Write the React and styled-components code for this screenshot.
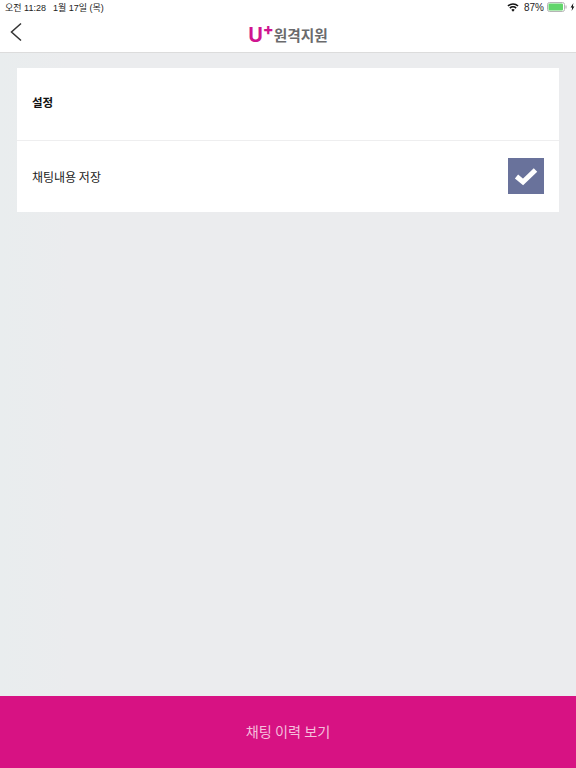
import { createGlobalStyle } from "styled-components";
import styled from "styled-components";

const Global = createGlobalStyle`
    html, body {
        margin: 0;
        padding: 0;
    }
    body {
        font-family: "Liberation Sans", "Noto Sans CJK KR", sans-serif;
        background: #ebecee;
    }
`;

export default function App() {
    return (
        <>
            <Global />
            <Page>
                <Top>
                    <StatusBar>
                        <StatusLeft>
                            <span>오전 11:28</span>
                            <span>1월 17일 (목)</span>
                        </StatusLeft>
                        <StatusRight>
                            <svg width="12" height="9" viewBox="0 0 13 10">
                                <path d="M6.5 9.6 L4.6 7.4 A3 3 0 0 1 8.4 7.4 Z" fill="#111" />
                                <path d="M3.6 6.3 L2.4 5 A6 6 0 0 1 10.6 5 L9.4 6.3 A4.4 4.4 0 0 0 3.6 6.3 Z" fill="#111" />
                                <path d="M1.5 4 L0.3 2.8 A9 9 0 0 1 12.7 2.8 L11.5 4 A7.4 7.4 0 0 0 1.5 4 Z" fill="#111" />
                            </svg>
                            <Percent>87%</Percent>
                            <svg width="28" height="10" viewBox="0 0 28 10">
                                <rect x="0.5" y="0.5" width="17" height="9" rx="2" fill="none" stroke="#b5b5b5" />
                                <rect x="1.5" y="1.5" width="14.5" height="7" rx="1" fill="#62d56b" />
                                <rect x="18.5" y="3.5" width="1" height="3" fill="#a9a9a9" />
                                <path d="M26.4 1 L23.6 5.4 H25.2 L24.6 9 L27.4 4.4 H25.8 Z" fill="#111" />
                            </svg>
                        </StatusRight>
                    </StatusBar>
                    <NavBar>
                        <BackButton>
                            <svg width="14" height="20" viewBox="0 0 14 20">
                                <path d="M12 1.5 L2.5 10 L12 18.5" fill="none" stroke="#333" strokeWidth="1.5" />
                            </svg>
                        </BackButton>
                        <Logo>
                            <LogoU>U</LogoU>
                            <LogoPlus>+</LogoPlus>
                            <LogoText>원격지원</LogoText>
                        </Logo>
                    </NavBar>
                </Top>
                <Card>
                    <Row>
                        <Heading>설정</Heading>
                    </Row>
                    <Row>
                        <Label>채팅내용 저장</Label>
                        <CheckBox>
                            <svg width="24" height="20" viewBox="0 0 24 20">
                                <path d="M2.5 10.5 L9 16 L21.5 4" fill="none" stroke="#fff" strokeWidth="5" />
                            </svg>
                        </CheckBox>
                    </Row>
                </Card>
                <Spacer />
                <Footer>채팅 이력 보기</Footer>
            </Page>
        </>
    );
}

const Page = styled.div`
    width: 576px;
    height: 768px;
    display: flex;
    flex-direction: column;
    overflow: hidden;
    background: linear-gradient(90deg, #e9edee, #ebecee 12%);
`;

const Top = styled.div`
    background: #fff;
    border-bottom: 1px solid #dcdcdc;
    height: 52px;
    flex-shrink: 0;
`;

const StatusBar = styled.div`
    height: 14px;
    padding: 0 1px 0 5px;
    display: flex;
    align-items: center;
    justify-content: space-between;
    font-size: 9px;
    color: #222;
`;

const StatusLeft = styled.div`
    display: flex;
    gap: 7px;
`;

const StatusRight = styled.div`
    display: flex;
    align-items: center;
    gap: 3px;
`;

const Percent = styled.span`
    font-size: 10px;
    margin-left: 2px;
`;

const NavBar = styled.div`
    position: relative;
    height: 38px;
    display: flex;
    align-items: center;
    justify-content: center;
`;

const BackButton = styled.div`
    position: absolute;
    left: 9px;
    top: 8px;
    line-height: 0;
`;

const Logo = styled.div`
    display: flex;
    align-items: flex-start;
    margin-top: 4px;
`;

const LogoU = styled.span`
    font-family: "Inter", sans-serif;
    font-size: 20px;
    line-height: 22px;
    font-weight: 700;
    color: #cf1490;
`;

const LogoPlus = styled.span`
    font-family: "Inter", sans-serif;
    font-size: 16px;
    line-height: 11px;
    font-weight: 800;
    color: #cf1490;
`;

const LogoText = styled.span`
    font-family: "Noto Sans CJK KR", sans-serif;
    font-size: 14.7px;
    line-height: 21px;
    font-weight: 700;
    color: #6a6a6c;
`;

const Card = styled.div`
    margin: 15px 17px 0;
    background: #fff;
`;

const Row = styled.div`
    height: 72px;
    padding: 0 15px;
    display: flex;
    align-items: center;
    justify-content: space-between;
    box-sizing: border-box;
    & + & {
        border-top: 1px solid #eeeeef;
    }
`;

const Heading = styled.span`
    font-family: "Noto Sans CJK KR", sans-serif;
    font-size: 11.5px;
    font-weight: 700;
    color: #111;
    margin-bottom: 4px;
`;

const Label = styled.span`
    font-family: "Noto Sans CJK KR", sans-serif;
    font-size: 12px;
    color: #222;
    margin-bottom: 1px;
`;

const CheckBox = styled.div`
    width: 36px;
    height: 36px;
    background: #69729b;
    display: flex;
    align-items: center;
    justify-content: center;
    margin-bottom: 1px;
`;

const Spacer = styled.div`
    flex: 1;
`;

const Footer = styled.div`
    height: 72px;
    flex-shrink: 0;
    padding-bottom: 3px;
    box-sizing: border-box;
    background: #d71283;
    color: #f5bfdc;
    display: flex;
    align-items: center;
    justify-content: center;
    font-family: "Noto Sans CJK KR", sans-serif;
    font-size: 14.2px;
`;
